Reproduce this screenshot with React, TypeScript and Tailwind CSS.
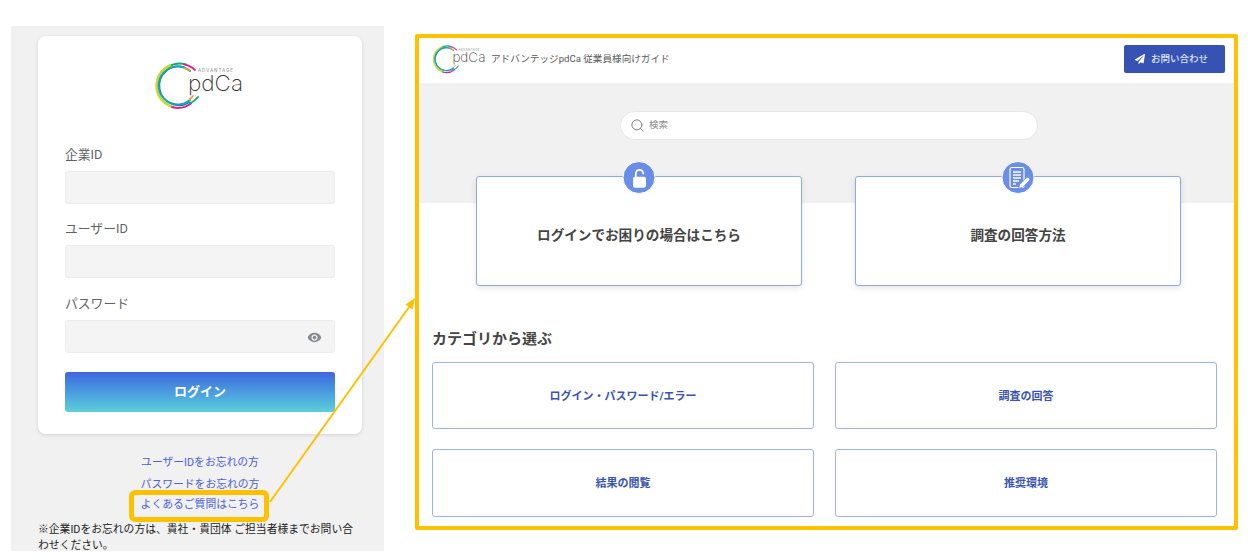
import { FaPaperPlane } from 'react-icons/fa';
import { MdVisibility } from 'react-icons/md';
import { Search } from 'lucide-react';

const FONT = "font-['Roboto','Noto_Sans_CJK_JP',sans-serif]";

const arcs = [
  { d: 'M14 5A22 22 0 0 1 32 2.5', color: '#17a86b', w: 2 },
  { d: 'M30 2.4A22 22 0 0 1 41 8', color: '#e0218a', w: 1.8 },
  { d: 'M16 3.5A22 22 0 0 0 19 45', color: '#c8d92b', w: 2.6 },
  { d: 'M30 5A19.5 19.5 0 1 0 36 40', color: '#1f6fb5', w: 1.3 },
  { d: 'M36 9A19 19 0 1 0 36 38', color: '#18a3b5', w: 2 },
  { d: 'M18 45A22 22 0 0 0 37 41.5', color: '#e0218a', w: 2 },
  { d: 'M36 41.5A22 22 0 0 0 44 35', color: '#17a86b', w: 1.8 },
  { d: 'M35.5 37.5A18 18 0 0 0 39 34', color: '#f39a1e', w: 1.6 },
  { d: 'M30 6A18 18 0 0 1 36 8.5', color: '#f39a1e', w: 1.6 },
];

function Logo({ className }: { className: string }) {
  return (
    <svg viewBox="0 0 90 48" className={className}>
      {arcs.map((a) => (
        <path key={a.d} d={a.d} fill="none" stroke={a.color} strokeWidth={a.w} strokeLinecap="round" />
      ))}
      <text x="44" y="9.5" fontSize="4.6" fill="#8a8a8a" fontFamily="Inter, sans-serif" textLength="35">ADVANTAGE</text>
      <text x="34" y="28.5" fontSize="22" fontWeight="200" fill="#3a3434" fontFamily="Inter, sans-serif" textLength="55" lengthAdjust="spacingAndGlyphs">pdCa</text>
    </svg>
  );
}

function Field({ label, eye }: { label: string; eye?: boolean }) {
  return (
    <div>
      <div className="text-[12.8px] leading-[22px] text-[#5f6368]">{label}</div>
      <div className="relative mt-[5px] h-[33px] rounded-[3px] border border-[#ececec] bg-[#f4f4f4]">
        {eye && <MdVisibility className="absolute right-[12px] top-[9px] text-[15px] text-[#858b92]" />}
      </div>
    </div>
  );
}

function LoginPanel() {
  return (
    <div className="ml-[11px] mt-[26px] h-[525px] w-[373px] shrink-0 overflow-hidden bg-[#f1f1f1] px-[27px] pt-[10px]">
      <div className="h-[398px] w-[324px] rounded-[8px] bg-white px-[27px] pt-[26px] shadow-[0_1px_4px_rgba(0,0,0,0.12)]">
        <div className="flex justify-center">
          <Logo className="-ml-[2px] h-[48px] w-[90px]" />
        </div>
        <div className="mt-[34px] flex flex-col gap-[14.4px]">
          <Field label="企業ID" />
          <Field label="ユーザーID" />
          <Field label="パスワード" eye />
        </div>
        <button className="mt-[19px] h-[40px] w-full rounded-[3px] bg-gradient-to-b from-[#4065dd] to-[#5dcfdb] text-[13px] font-bold text-white">
          ログイン
        </button>
      </div>
      <div className="mt-[18px] flex w-[324px] flex-col items-center text-[10.8px] leading-[22px] text-[#4a60d8]">
        <div>ユーザーIDをお忘れの方</div>
        <div>パスワードをお忘れの方</div>
        <div className="relative z-10 -mt-[6px] flex h-[32px] w-[140px] -translate-x-px items-center justify-center rounded-[6px] border-[5px] border-[#ffc000] pb-[2px] pl-[2px]">
          よくあるご質問はこちら
        </div>
      </div>
      <p className="w-[324px] text-[10.8px] leading-[16px] text-[#1a1a1a]">
        ※企業IDをお忘れの方は、貴社・貴団体 ご担当者様までお問い合わせください。
      </p>
    </div>
  );
}

function UnlockIcon() {
  return (
    <svg viewBox="0 0 24 24" className="h-[22px] w-[22px]" fill="none">
      <path d="M8 11V7.2a4 4 0 0 1 8 0" stroke="white" strokeWidth="2" strokeLinecap="round" />
      <rect x="5" y="10.5" width="14" height="12" rx="2" fill="white" />
    </svg>
  );
}

function DocIcon() {
  return (
    <svg viewBox="0 0 24 24" className="h-[24px] w-[24px]" fill="none">
      <rect x="3.5" y="1.5" width="14" height="20" rx="2" stroke="white" strokeWidth="1.2" />
      <path d="M6.5 6h8M6.5 9h8M6.5 12h8M6.5 15h6M6.5 18h3" stroke="white" strokeWidth="1.5" />
      <path d="M12 22.5l1.2-4 6.5-6.5a1.6 1.6 0 0 1 3 2.8l-6.6 6.5z" fill="white" stroke="#6a8de8" strokeWidth="0.8" />
    </svg>
  );
}

function TopCard({ title, icon }: { title: string; icon: React.ReactNode }) {
  return (
    <div className="relative flex h-[110px] w-[326px] items-center justify-center rounded-[3px] border border-[#8ea8ef] bg-white pt-[8px] shadow-[0_2px_6px_rgba(0,0,0,0.1)]">
      <div className="absolute left-1/2 top-[-16px] flex h-[33px] w-[33px] -translate-x-1/2 items-center justify-center rounded-full border border-white bg-[#6a8de8]">
        {icon}
      </div>
      <span className="text-[13.6px] font-bold text-[#444]">{title}</span>
    </div>
  );
}

function CategoryCard({ title }: { title: string }) {
  return (
    <div className="flex items-center justify-center rounded-[3px] border border-[#9db2ef] bg-white pt-[3px] text-[11px] font-bold text-[#3a54b4]">
      {title}
    </div>
  );
}

function GuideFrame() {
  return (
    <div className="ml-[31px] mt-[34px] h-[496px] w-[823px] shrink-0 overflow-hidden rounded-[2px] border-4 border-[#ffc000] bg-white">
      <header className="flex h-[45px] items-start justify-between pl-[13px] pr-[9px] pt-[7px]">
        <div className="flex items-center">
          <Logo className="h-[28.8px] w-[54px]" />
          <span className="ml-[5px] text-[9.6px] text-[#5a5a5a]">アドバンテッジpdCa 従業員様向けガイド</span>
        </div>
        <button className="flex h-[28px] w-[101px] items-center justify-center gap-[6px] rounded-[2px] bg-[#3652b4] pr-[6px] text-[9.5px] font-medium text-[#dfe4f5]">
          <FaPaperPlane className="text-[10px] text-white" />
          お問い合わせ
        </button>
      </header>
      <section className="h-[120px] bg-[#f1f1f1] pt-[28px]">
        <div className="ml-[201px] flex h-[29px] w-[418px] items-center gap-[4px] rounded-full border border-[#e6e6e6] bg-white pl-[9px]">
          <Search size={15} strokeWidth={1.5} className="text-[#777]" />
          <span className="text-[9.5px] text-[#8a8a8a]">検索</span>
        </div>
        <div className="ml-[57px] mt-[36px] flex gap-[53px]">
          <TopCard title="ログインでお困りの場合はこちら" icon={<UnlockIcon />} />
          <TopCard title="調査の回答方法" icon={<DocIcon />} />
        </div>
      </section>
      <section className="px-[13px] pt-[124px]">
        <h2 className="text-[15px] font-bold leading-6 text-[#444]">カテゴリから選ぶ</h2>
        <div className="mt-[11px] grid grid-cols-[382px_382px] grid-rows-[67px_68px] gap-x-[21px] gap-y-[20px]">
          <CategoryCard title="ログイン・パスワード/エラー" />
          <CategoryCard title="調査の回答" />
          <CategoryCard title="結果の閲覧" />
          <CategoryCard title="推奨環境" />
        </div>
      </section>
    </div>
  );
}

export default function App() {
  return (
    <div className={`relative flex h-[560px] w-[1257px] items-start overflow-hidden bg-white ${FONT}`}>
      <LoginPanel />
      <GuideFrame />
      {/* 화살표 overlay */}
      <svg className="pointer-events-none absolute left-0 top-0 h-[560px] w-[1257px]" viewBox="0 0 1257 560">
        <path d="M270 502L412 303" stroke="#ffc000" strokeWidth="2" fill="none" />
        <path d="M415 298L405.5 304.5L412.5 309.5Z" fill="#ffc000" />
      </svg>
    </div>
  );
}
